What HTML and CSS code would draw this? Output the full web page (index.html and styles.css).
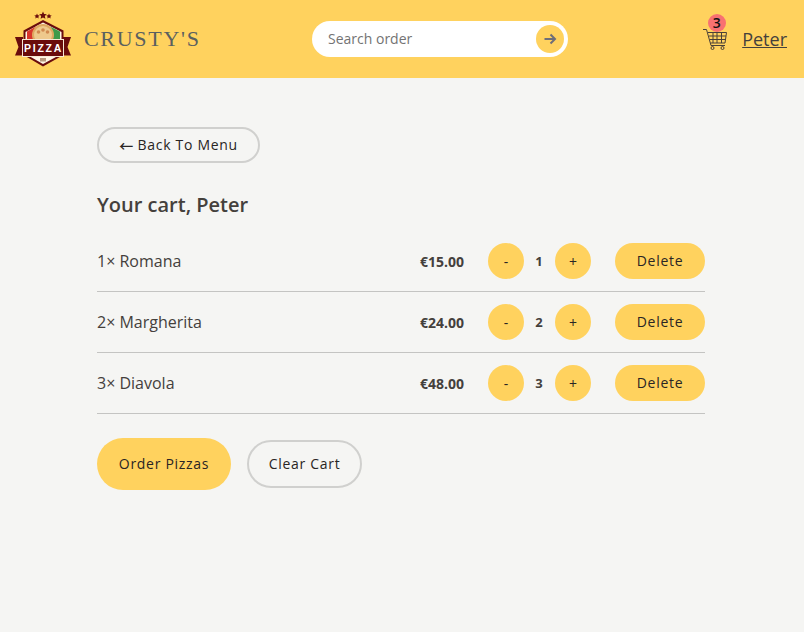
FILE: index.html
```html
<!DOCTYPE html>
<html lang="en">
<head>
<meta charset="utf-8">
<title>Crusty's</title>
<link rel="stylesheet" href="styles.css">
</head>
<body>
<header class="header">
  <a class="brand" href="#">
    <svg class="logo" viewBox="12 8 62 62" width="62" height="62" aria-hidden="true">
      <polygon points="37,13.500 37.800,15.300 39.700,15.500 38.300,16.700 38.700,18.500 37,17.600 35.300,18.500 35.700,16.700 34.300,15.500 36.200,15.300" fill="#6a0c0c"/>
      <polygon points="43,11.500 44.100,14.100 46.900,14.300 44.800,16.100 45.400,18.800 43,17.400 40.600,18.800 41.200,16.100 39.100,14.300 41.900,14.100" fill="#6a0c0c"/>
      <polygon points="49,13.500 49.800,15.300 51.700,15.500 50.300,16.700 50.700,18.500 49,17.600 47.300,18.500 47.700,16.700 46.300,15.500 48.200,15.300" fill="#6a0c0c"/>
      <polygon points="43,20 63.500,30.500 63.500,55 43,66.500 23.500,55 23.500,30.500" fill="#6a0c0c"/>
      <polygon points="43,22.500 61.500,32 61.500,54 43,64 25.500,54 25.500,32" fill="#fff6e6"/>
      <polygon points="36,26.500 27,31.500 27,40 33,40" fill="#d9362b"/>
      <polygon points="50,26.500 60,31.500 60,40 53,40" fill="#3f9a4a"/>
      <circle cx="43" cy="35" r="11" fill="#dfa860"/>
      <circle cx="43" cy="35" r="9" fill="#eec98c"/>
      <circle cx="38.500" cy="32" r="1.800" fill="#d08a50"/>
      <circle cx="47.500" cy="32" r="1.800" fill="#d08a50"/>
      <circle cx="43" cy="30" r="1.800" fill="#d08a50"/>
      <polygon points="23,37 15,37 18.500,47 15,55.500 23,55.500" fill="#6a0c0c"/>
      <polygon points="63,37 71,37 67.500,47 71,55.500 63,55.500" fill="#6a0c0c"/>
      <rect x="22.500" y="39.500" width="41" height="17" fill="#6a0c0c" stroke="#f6e9d5" stroke-width="1"/>
      <text class="logo-text" x="43.500" y="52" text-anchor="middle">PIZZA</text>
      <rect x="40" y="58" width="6" height="3.500" fill="#b89a80"/>
    </svg>
    <span class="brand-name">CRUSTY'S</span>
  </a>
  <form class="search">
    <span class="search-text">Search order</span>
    <button class="search-go" type="button" aria-label="Search">
      <svg viewBox="0 0 14 14" width="14" height="14" aria-hidden="true"><path d="M1.500 7H12M7.500 2.500 12 7l-4.500 4.500" fill="none" stroke="#6e6e78" stroke-width="2"/></svg>
    </button>
  </form>
  <div class="user">
    <a class="cart" href="#" aria-label="Cart">
      <svg class="cart-icon" viewBox="0 0 24 24" width="24" height="24" aria-hidden="true">
        <g fill="none" stroke="#4a4038" stroke-width="1">
          <path d="M0 1.500H3.500L8 17.500H22"/>
          <path d="M5 4.500H23.500L22 15H7.500"/>
          <path d="M6 8H23M6.800 11.500H22.500M10 4.500V15M14 4.500V15M18.500 4.500V15"/>
          <circle cx="9.500" cy="20" r="1.500"/>
          <circle cx="19.500" cy="20" r="1.500"/>
        </g>
      </svg>
      <span class="badge">3</span>
    </a>
    <a class="user-name" href="#">Peter</a>
  </div>
</header>
<main class="main">
  <a class="btn btn-outline btn-back" href="#"><span class="arrow">←</span> Back To Menu</a>
  <h2 class="title">Your cart, Peter</h2>
  <ul class="list">
    <li class="row">
      <p class="name">1× Romana</p>
      <p class="price">€15.00</p>
      <div class="qty"><button class="round">-</button><span class="count">1</span><button class="round">+</button></div>
      <button class="btn btn-delete">Delete</button>
    </li>
    <li class="row">
      <p class="name">2× Margherita</p>
      <p class="price">€24.00</p>
      <div class="qty"><button class="round">-</button><span class="count">2</span><button class="round">+</button></div>
      <button class="btn btn-delete">Delete</button>
    </li>
    <li class="row">
      <p class="name">3× Diavola</p>
      <p class="price">€48.00</p>
      <div class="qty"><button class="round">-</button><span class="count">3</span><button class="round">+</button></div>
      <button class="btn btn-delete">Delete</button>
    </li>
  </ul>
  <div class="actions">
    <a class="btn btn-order" href="#">Order Pizzas</a>
    <button class="btn btn-outline btn-clear">Clear Cart</button>
  </div>
</main>
</body>
</html>
```
FILE: styles.css
```css
* { box-sizing: border-box; }
html, body { margin: 0; height: 100%; overflow: hidden; }
body {
  background: #f5f5f3;
  color: #44403c;
  font-family: "Open Sans", sans-serif;
  font-size: 16px;
}
a { color: inherit; text-decoration: none; }
p, h2, ul { margin: 0; padding: 0; }
ul { list-style: none; }
button { font-family: inherit; color: inherit; border: 0; padding: 0; }

.header {
  height: 78px;
  background: #ffd25e;
  display: grid;
  grid-template-columns: 312px 256px 1fr;
  align-items: center;
  padding-right: 17px;
}
.brand { display: flex; align-items: center; padding-left: 12px; }
.logo { display: block; flex: none; }
.logo-text { font-family: "Liberation Sans Narrow", "Liberation Sans", sans-serif; font-size: 10.500px; font-weight: 700; fill: #fff; letter-spacing: 1.700px; }
.brand-name {
  margin-left: 10px;
  font-family: "Liberation Serif", serif;
  font-size: 22px;
  letter-spacing: 1.700px;
  color: #5a6060;
}
.search {
  height: 36px;
  background: #fff;
  border-radius: 18px;
  display: flex;
  align-items: center;
  justify-content: space-between;
  padding: 0 4px 0 16px;
}
.search-text { font-size: 14px; color: #737373; position: relative; top: -1px; }
.search-go {
  width: 28px;
  height: 28px;
  border-radius: 50%;
  background: #ffd25e;
  display: flex;
  align-items: center;
  justify-content: center;
}
.user { display: flex; justify-content: flex-end; align-items: center; gap: 15px; }
.cart { position: relative; display: block; width: 24px; height: 24px; margin-top: 1px; }
.cart-icon { display: block; }
.badge {
  position: absolute;
  left: 4.500px;
  top: -14px;
  width: 18px;
  height: 18px;
  border-radius: 50%;
  background: #f87171;
  color: #111;
  font-size: 14px;
  font-weight: 600;
  line-height: 18px;
  text-align: center;
}
.user-name { font-size: 18px; text-decoration: underline; }

.main { padding: 49px 99px 0 97px; }
.btn {
  display: inline-flex;
  align-items: center;
  justify-content: center;
  font-size: 14px;
  font-weight: 500;
  line-height: 20px;
  letter-spacing: 0.700px;
  color: #292524;
  border-radius: 999px;
}
.btn-outline { border: 2px solid #d0d0ce; background: transparent; }
.btn-back { width: 163px; height: 36px; white-space: pre; padding-bottom: 1px; }
.arrow { font-family: "Noto Sans CJK SC", sans-serif; letter-spacing: 0; line-height: 16px; }
.title { font-size: 20px; font-weight: 600; line-height: 28px; margin-top: 28px; }
.list { margin-top: 12px; }
.row {
  display: flex;
  align-items: center;
  height: 61px;
  border-bottom: 1px solid #c4c4c2;
}
.name { flex: 1; font-size: 16px; }
.price { font-size: 14px; font-weight: 700; }
.qty { display: flex; align-items: center; width: 103px; margin-left: 24px; justify-content: space-between; }
.count { font-size: 13px; font-weight: 700; width: 31px; text-align: center; padding-right: 1px; }
.round {
  width: 36px;
  height: 36px;
  border-radius: 50%;
  background: #ffd25e;
  font-size: 14px;
  color: #292524;
}
.btn-delete { width: 90px; height: 36px; margin-left: 24px; background: #ffd25e; }
.actions { display: flex; align-items: center; gap: 16px; margin-top: 24px; }
.btn-order { width: 134px; height: 52px; background: #ffd25e; padding-bottom: 1px; }
.btn-clear { width: 115px; height: 48px; padding-bottom: 1px; }
```
